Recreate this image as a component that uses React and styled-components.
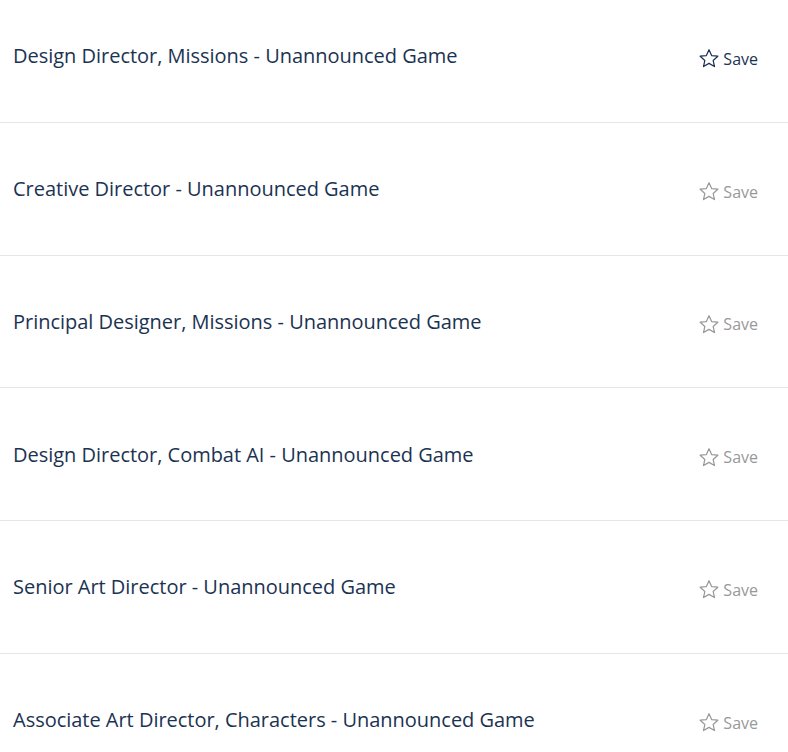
import styled, { createGlobalStyle } from "styled-components";

const jobs = [
  { title: "Design Director, Missions - Unannounced Game", active: true },
  { title: "Creative Director - Unannounced Game" },
  { title: "Principal Designer, Missions - Unannounced Game" },
  { title: "Design Director, Combat AI - Unannounced Game" },
  { title: "Senior Art Director - Unannounced Game" },
  { title: "Associate Art Director, Characters - Unannounced Game" },
];

const Star = () => (
  <svg width="22" height="21" viewBox="0 0 24 24" fill="none" stroke="currentColor" strokeWidth="1.4" strokeLinejoin="round">
    <path d="M12 2l3 6.6 7.1.75-5.35 4.85 1.5 7.05L12 17.6l-6.25 3.65 1.5-7.05L1.9 9.35 9 8.6z" />
  </svg>
);

const App = () => {
  return (
    <>
      <GlobalStyle />
      <List>
        {jobs.map((job) => (
          <Row key={job.title}>
            <Title>{job.title}</Title>
            <SaveButton $active={job.active}>
              <Star />
              <span>Save</span>
            </SaveButton>
          </Row>
        ))}
      </List>
    </>
  );
};

export default App;

const GlobalStyle = createGlobalStyle`
  body {
    margin: 0;
    background: #ffffff;
    font-family: "Open Sans", "Noto Sans", sans-serif;
    overflow: hidden;
  }
`;

const List = styled.ul`
  list-style: none;
  margin: -10px 0 0;
  padding: 0;
`;

const Row = styled.li`
  box-sizing: border-box;
  height: 132.75px;
  display: flex;
  align-items: center;
  justify-content: space-between;
  padding: 0 30px 0 13px;
  border-bottom: 1px solid #e6e6e6;
`;

const Title = styled.span`
  font-size: 20px;
  color: #1b3352;
  letter-spacing: -0.02px;
`;

const SaveButton = styled.button`
  display: flex;
  align-items: center;
  gap: 3px;
  margin-top: 6px;
  padding: 0;
  border: none;
  background: none;
  font-family: inherit;
  font-size: 16px;
  color: ${(p) => (p.$active ? "#1b3352" : "#999999")};
  cursor: pointer;
`;
